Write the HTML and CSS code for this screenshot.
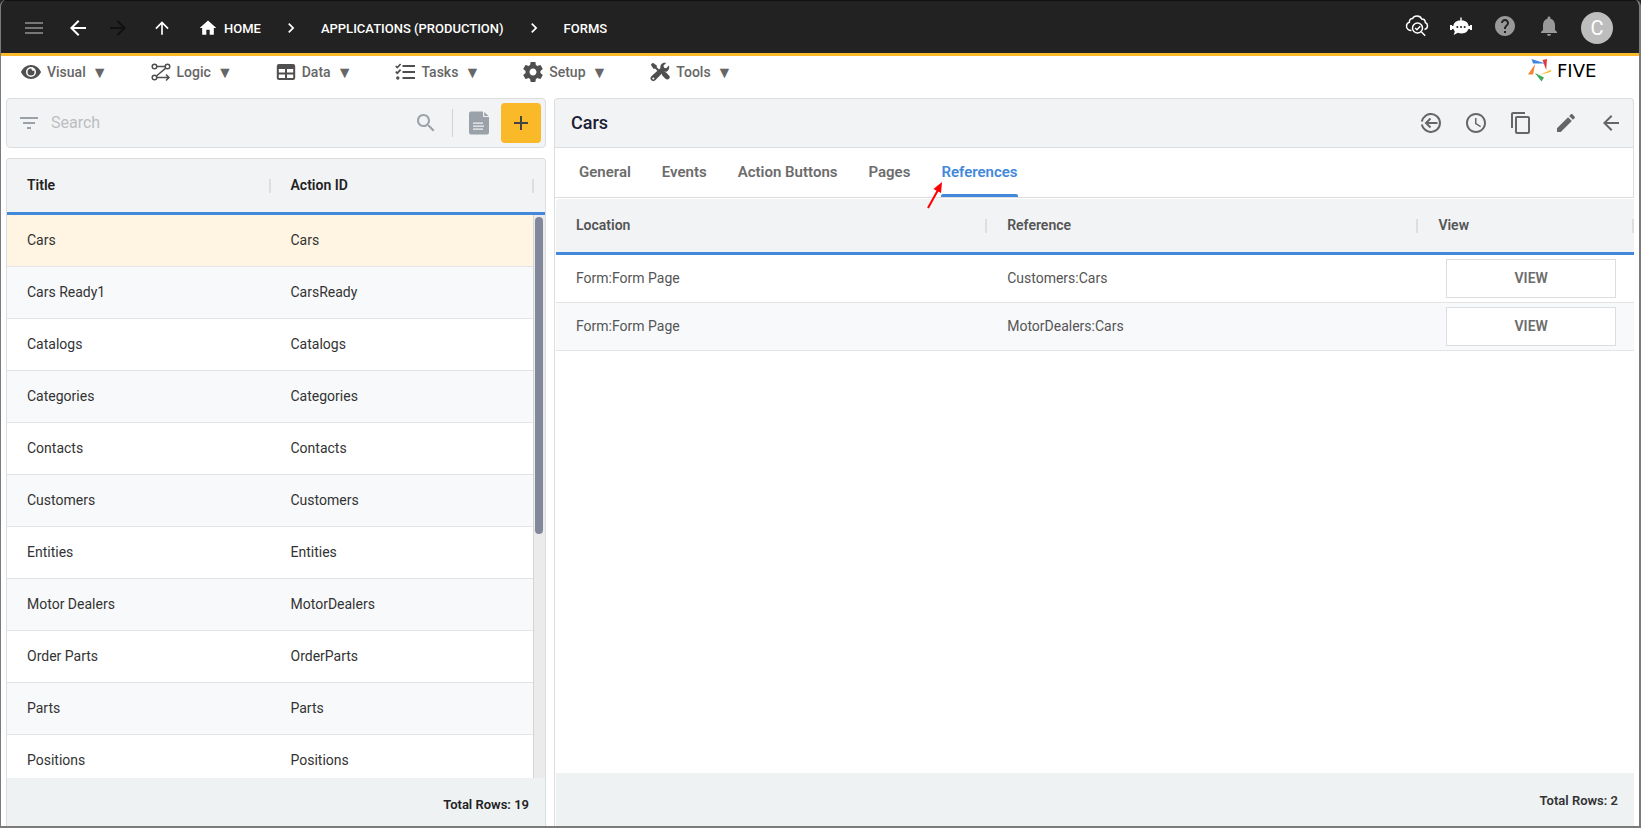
FILE: index.html
```html
<!DOCTYPE html>
<html lang="en">
<head>
<meta charset="utf-8">
<title>Five - Forms</title>
<link rel="stylesheet" href="styles.css">
</head>
<body>
<div class="app">
  <header class="topbar">
    <div class="nav">
      <button class="icon-btn dim" aria-label="Menu"><svg class="i24" viewBox="0 0 24 24"><path d="M3 18h18v-2H3v2zm0-5h18v-2H3v2zm0-7v2h18V6H3z"/></svg></button>
      <button class="icon-btn" aria-label="Back"><svg class="i24" viewBox="0 0 24 24"><path d="M20 11H7.830l5.590-5.590L12 4l-8 8 8 8 1.410-1.410L7.830 13H20v-2z"/></svg></button>
      <button class="icon-btn off" aria-label="Forward"><svg class="i24" viewBox="0 0 24 24"><path d="M12 4l-1.410 1.410L16.170 11H4v2h12.170l-5.580 5.590L12 20l8-8z"/></svg></button>
      <button class="icon-btn" aria-label="Up"><svg class="i20" viewBox="0 0 24 24"><path d="M4 12l1.410 1.410L11 7.830V20h2V7.830l5.580 5.590L20 12l-8-8-8 8z"/></svg></button>
    </div>
    <nav class="crumbs">
      <a href="#"><svg class="i20" viewBox="0 0 24 24"><path d="M10 20v-6h4v6h5v-8h3L12 3 2 12h3v8z"/></svg>HOME</a>
      <svg class="i20" viewBox="0 0 24 24"><path d="M10 6L8.590 7.410 13.170 12l-4.580 4.590L10 18l6-6z"/></svg>
      <a href="#">APPLICATIONS (PRODUCTION)</a>
      <svg class="i20" viewBox="0 0 24 24"><path d="M10 6L8.590 7.410 13.170 12l-4.580 4.590L10 18l6-6z"/></svg>
      <a href="#">FORMS</a>
    </nav>
    <div class="account">
      <button class="icon-btn" aria-label="Inspect"><svg class="i24 line" viewBox="0 0 24 24"><path d="M6.500 16.500C3.500 16.500 1.500 14.500 1.500 12c0-2 1.200-3.300 2.900-3.800C4.200 5.900 5.600 4.600 7.500 4.600 8.300 2.800 10 2 12 2c2.400 0 4 1.100 4.700 3 2.300 0 3.600 1.500 3.600 3.500 1.500.6 2.200 1.800 2.200 3.200 0 2-1.200 3.300-3 3.800"/><circle cx="12.500" cy="14" r="5"/><path d="M10.200 14l1.700 1.700 3.300-3.500M16.200 17.700l4 4"/></svg></button>
      <button class="icon-btn" aria-label="Assistant"><svg class="i24" viewBox="0 0 24 24"><path d="M11.300 3.500h1.400v3H13c4 0 6.700 2.500 6.700 6.600s-3 6.400-7 6.400c-1.500 0-2.700-.2-3.700-.7L4.600 21l1.300-3.600C4.800 16.300 4.300 14.800 4.300 13c0-4 2.700-6.500 6.700-6.500h.3zM1 11h2v5H1zM21 11h2v5h-2zM2.500 12h2v3h-2zM19.500 12h2v3h-2z"/><g fill="#222"><circle cx="8.300" cy="13" r="1"/><circle cx="12" cy="13" r="1"/><circle cx="15.700" cy="13" r="1"/></g></svg></button>
      <button class="icon-btn soft" aria-label="Help"><svg class="i24" viewBox="0 0 24 24"><path d="M12 2C6.480 2 2 6.480 2 12s4.480 10 10 10 10-4.480 10-10S17.520 2 12 2zm1 17h-2v-2h2v2zm2.070-7.750l-.9.920C13.450 12.900 13 13.500 13 15h-2v-.5c0-1.100.45-2.100 1.170-2.830l1.240-1.260c.37-.36.590-.86.590-1.410 0-1.100-.9-2-2-2s-2 .9-2 2H8c0-2.210 1.790-4 4-4s4 1.790 4 4c0 .88-.36 1.680-.93 2.250z"/></svg></button>
      <button class="icon-btn soft" aria-label="Notifications"><svg class="i24" viewBox="0 0 24 24"><path d="M12 22c1.100 0 2-.9 2-2h-4c0 1.100.89 2 2 2zm6-6v-5c0-3.070-1.640-5.640-4.500-6.320V4c0-.83-.67-1.500-1.500-1.500s-1.500.67-1.500 1.500v.68C7.630 5.360 6 7.920 6 11v5l-2 2v1h16v-1l-2-2z"/></svg></button>
      <button class="avatar" aria-label="Account">C</button>
    </div>
  </header>

  <nav class="menubar">
    <div class="menus">
      <button class="menu"><svg class="i20" viewBox="0 0 20 20"><path d="M10 3C5.500 3 1.700 5.900 0 10c1.700 4.100 5.500 7 10 7s8.300-2.900 10-7c-1.700-4.100-5.500-7-10-7zm0 12a5 5 0 1 1 0-10 5 5 0 0 1 0 10z"/><path d="M10 6.500a3.500 3.500 0 1 0 3.500 3.500c0-.5-.1-.9-.3-1.400A2 2 0 0 1 10.400 6.500z"/></svg>Visual <span>▼</span></button>
      <button class="menu"><svg class="i20 line" viewBox="0 0 20 20"><circle cx="3.500" cy="4.500" r="2.300"/><circle cx="16.500" cy="4.500" r="2.300"/><circle cx="3.500" cy="15.500" r="2.300"/><path d="M5.800 4.500h8.400M14.800 6.200L5.400 14M5.800 15.500h12M15 12.500l3 3-3 3"/></svg>Logic <span>▼</span></button>
      <button class="menu"><svg class="i20" viewBox="0 0 20 20"><path fill-rule="evenodd" d="M3 2h14a2.200 2.200 0 0 1 2.200 2.200v11.600A2.200 2.200 0 0 1 17 18H3a2.200 2.200 0 0 1-2.200-2.200V4.200A2.200 2.200 0 0 1 3 2zM2.800 7v3.500H9V7zM11 7v3.500h6.200V7zM2.800 12.500V16H9v-3.500zM11 12.500V16h6.200v-3.500z"/></svg>Data <span>▼</span></button>
      <button class="menu"><svg class="i20" viewBox="0 0 20 20"><path d="M7.500 3H20v2H7.500zM7.500 9H20v2H7.500zM7.500 15H20v2H7.500z"/><circle cx="2.800" cy="16" r="1.700"/><path class="stroke" d="M.8 4l1.500 1.500L5.600 2M.8 9.700l1.500 1.500 3.300-3.500"/></svg>Tasks <span>▼</span></button>
      <button class="menu"><svg class="i20" viewBox="2 2 20 20"><path d="M19.430 12.980c.04-.32.07-.64.07-.98s-.03-.66-.07-.98l2.110-1.650c.19-.15.24-.42.120-.64l-2-3.460c-.12-.22-.39-.3-.61-.22l-2.490 1c-.52-.4-1.080-.73-1.690-.98l-.38-2.650C14.460 2.180 14.250 2 14 2h-4c-.25 0-.46.18-.49.42l-.38 2.650c-.61.25-1.170.59-1.690.98l-2.490-1c-.23-.09-.49 0-.61.22l-2 3.460c-.13.22-.07.49.120.64l2.110 1.650c-.04.32-.07.65-.07.98s.03.66.07.98l-2.110 1.650c-.19.15-.24.42-.12.64l2 3.460c.12.22.39.3.61.22l2.490-1c.52.4 1.080.73 1.690.98l.38 2.650c.03.24.24.42.49.42h4c.25 0 .46-.18.49-.42l.38-2.650c.61-.25 1.170-.59 1.690-.98l2.490 1c.23.09.49 0 .61-.22l2-3.460c.12-.22.07-.49-.12-.64l-2.110-1.650zM12 15.500c-1.930 0-3.500-1.570-3.500-3.500s1.570-3.500 3.500-3.500 3.500 1.570 3.500 3.500-1.570 3.500-3.500 3.500z"/></svg>Setup <span>▼</span></button>
      <button class="menu"><svg class="i20" viewBox="0 0 20 20"><path d="M.8 2.800L2.800.8l4 2.600v1.900l3.700 3.700-1.500 1.500-3.700-3.700H3.400zM11.200 11l2-2 .8.700c.8-.1 1.500.1 2.100.7l2.900 3c1 1 1 2.400 0 3.400s-2.500 1-3.500 0l-3-3c-.6-.6-.8-1.400-.6-2.100z"/><path fill-rule="evenodd" d="M18.900 3.600l-2.700 2.700-2.200-.6-.5-2.100L16.200.9c-1.900-.6-3.900 0-5.100 1.500-.8 1.200-1 2.500-.6 3.700L1.400 14.300c-1.200 1.100-1.200 2.900-.1 4s2.900 1.100 4 0l8.300-8.600c1.500.4 3 .1 4.200-1 1.400-1.300 1.800-3.300 1.100-5.100zM3.300 15.500a1 1 0 1 1 0 2 1 1 0 0 1 0-2z"/></svg>Tools <span>▼</span></button>
    </div>
    <div class="logo">
      <svg class="i24" viewBox="0 0 24 24"><path fill="#3f87dd" d="M3.500 1l14 4.500H5z"/><path fill="#e5383d" d="M14.500 2L19 1l-.8 11z"/><path fill="#fbb829" d="M23.500 11.500L22.500 14 11.500 17z"/><path fill="#3cab58" d="M7 15l9 4.500-2.500 4z"/><path fill="#f58233" d="M7.200 6L5 16.500H0z"/></svg>
      <span>FIVE</span>
    </div>
  </nav>

  <main class="content">
    <section class="side">
      <div class="searchbar">
        <button class="icon-btn" aria-label="Filter"><svg class="i24" viewBox="0 0 24 24"><path d="M10 18h4v-2h-4v2zM3 6v2h18V6H3zm3 7h12v-2H6v2z"/></svg></button>
        <input type="text" placeholder="Search" aria-label="Search">
        <button class="icon-btn" aria-label="Run search"><svg class="i24" viewBox="0 0 24 24"><path d="M15.500 14h-.79l-.28-.27C15.410 12.590 16 11.110 16 9.500 16 5.910 13.090 3 9.500 3S3 5.910 3 9.500 5.910 16 9.500 16c1.610 0 3.090-.59 4.230-1.570l.27.280v.79l5 4.990L20.490 19l-4.990-5zm-6 0C7.010 14 5 11.990 5 9.500S7.010 5 9.500 5 14 7.010 14 9.500 11.990 14 9.500 14z"/></svg></button>
        <span class="divider"></span>
        <button class="icon-btn doc" aria-label="Document"><svg class="i24" viewBox="0 0 24 24"><path fill-rule="evenodd" d="M4 .5h12v4.500c0 .6.400 1 1 1h5v15.500a2 2 0 0 1-2 2H4a2 2 0 0 1-2-2v-19a2 2 0 0 1 2-2zM6 11.500v1.300h10v-1.300zM6 14.500v1.300h11v-1.300zM6 17.500v1.300h10v-1.300zM17.200.9L21.600 5h-4.400z"/></svg></button>
        <button class="add" aria-label="Add"><svg class="i24" viewBox="0 0 24 24"><path d="M19 13h-6v6h-2v-6H5v-2h6V5h2v6h6v2z"/></svg></button>
      </div>
      <div class="list">
        <div class="list-body">
          <table class="forms">
            <colgroup><col><col><col class="gutter"></colgroup>
            <thead><tr><th>Title</th><th>Action ID</th><th></th></tr></thead>
            <tbody>
              <tr class="selected"><td>Cars</td><td>Cars</td><td></td></tr>
              <tr><td>Cars Ready1</td><td>CarsReady</td><td></td></tr>
              <tr><td>Catalogs</td><td>Catalogs</td><td></td></tr>
              <tr><td>Categories</td><td>Categories</td><td></td></tr>
              <tr><td>Contacts</td><td>Contacts</td><td></td></tr>
              <tr><td>Customers</td><td>Customers</td><td></td></tr>
              <tr><td>Entities</td><td>Entities</td><td></td></tr>
              <tr><td>Motor Dealers</td><td>MotorDealers</td><td></td></tr>
              <tr><td>Order Parts</td><td>OrderParts</td><td></td></tr>
              <tr><td>Parts</td><td>Parts</td><td></td></tr>
              <tr><td>Positions</td><td>Positions</td><td></td></tr>
            </tbody>
          </table>
          <div class="track"><div class="thumb"></div></div>
        </div>
        <footer class="total">Total Rows: 19</footer>
      </div>
    </section>

    <section class="detail">
      <div class="detail-head">
        <h1>Cars</h1>
        <div class="actions">
          <button class="icon-btn" aria-label="Exit"><svg class="i24 line thick" viewBox="0 0 24 24"><path d="M5 6.300a9 9 0 1 1 0 11.400M2.800 10.500a9 9 0 0 1 3.500-5.500M2.800 13.500a9 9 0 0 0 3.500 5.500"/><path d="M18.500 12H7M11.500 7.500L7 12l4.500 4.500"/></svg></button>
          <button class="icon-btn" aria-label="History"><svg class="i24" viewBox="0 0 24 24"><path d="M11.990 2C6.470 2 2 6.480 2 12s4.470 10 9.990 10C17.520 22 22 17.520 22 12S17.520 2 11.990 2zM12 20c-4.420 0-8-3.580-8-8s3.580-8 8-8 8 3.580 8 8-3.580 8-8 8zm.5-13H11v6l5.250 3.150.75-1.230-4.500-2.670z"/></svg></button>
          <button class="icon-btn" aria-label="Copy"><svg class="i24" viewBox="0 0 24 24"><path d="M16 1H4c-1.100 0-2 .9-2 2v14h2V3h12V1zm3 4H8c-1.100 0-2 .9-2 2v14c0 1.100.9 2 2 2h11c1.100 0 2-.9 2-2V7c0-1.100-.9-2-2-2zm0 16H8V7h11v14z"/></svg></button>
          <button class="icon-btn" aria-label="Edit"><svg class="i24" viewBox="0 0 24 24"><path d="M3 17.250V21h3.750L17.810 9.940l-3.750-3.750L3 17.250zM20.710 7.040c.39-.39.390-1.020 0-1.410l-2.340-2.340c-.39-.39-1.020-.39-1.410 0l-1.830 1.830 3.750 3.750 1.830-1.830z"/></svg></button>
          <button class="icon-btn" aria-label="Close"><svg class="i24" viewBox="0 0 24 24"><path d="M20 11H7.830l5.590-5.590L12 4l-8 8 8 8 1.410-1.410L7.830 13H20v-2z"/></svg></button>
        </div>
      </div>
      <div class="tabs" role="tablist">
        <button role="tab">General</button>
        <button role="tab">Events</button>
        <button role="tab">Action Buttons</button>
        <button role="tab">Pages</button>
        <button role="tab" class="active" aria-selected="true">References<svg class="pointer" viewBox="0 0 20 28"><path d="M2 27L12 9" stroke="#f00" stroke-width="2"/><path fill="#f00" d="M16 1l-1 11-7.500-4z"/></svg></button>
      </div>
      <div class="refs-body">
        <table class="refs">
          <colgroup><col class="wide"><col class="wide"><col></colgroup>
          <thead><tr><th>Location</th><th>Reference</th><th>View</th></tr></thead>
          <tbody>
            <tr><td>Form:Form Page</td><td>Customers:Cars</td><td><button class="view">VIEW</button></td></tr>
            <tr><td>Form:Form Page</td><td>MotorDealers:Cars</td><td><button class="view">VIEW</button></td></tr>
          </tbody>
        </table>
      </div>
      <footer class="total">Total Rows: 2</footer>
    </section>
  </main>
</div>
</body>
</html>
```
FILE: styles.css
```css
* { box-sizing: border-box; }

body {
  margin: 0;
  background: #222;
  font-family: Roboto, "Liberation Sans", sans-serif;
  font-size: 14px;
  color: #333;
}

button {
  border: 0;
  padding: 0;
  background: none;
  font: inherit;
  color: inherit;
  cursor: pointer;
}

svg { display: block; fill: currentColor; flex: none; }
.i24 { width: 24px; height: 24px; }
.i20 { width: 20px; height: 20px; }
.line { fill: none; stroke: currentColor; stroke-width: 1.500; }
.thick { stroke-width: 2; }
.stroke { fill: none; stroke: currentColor; stroke-width: 1.700; }

.app {
  height: 100vh;
  display: flex;
  flex-direction: column;
  background: #fff;
  border: solid #7b7b7b;
  border-width: 0 2px 2px 1px;
  border-radius: 6px 6px 0 0;
  overflow: hidden;
}

/* Top bar */
.topbar {
  display: flex;
  align-items: center;
  height: 56px;
  flex: none;
  padding: 1px 26px 0 21px;
  background: #222;
  border-top: 1px solid #111;
  border-bottom: 3px solid #f9b928;
  color: #fff;
}
.nav { display: flex; align-items: center; gap: 20px; }
.nav .icon-btn { width: 24px; display: flex; justify-content: center; }
.nav .icon-btn:nth-child(2) { margin-right: -4px; }
.dim { color: #777; }
.off { color: #111; }
.soft { color: #999; }
.crumbs {
  display: flex;
  align-items: center;
  gap: 20px;
  margin-left: 24px;
  padding-top: 1px;
  font-size: 13px;
  font-weight: 500;
}
.crumbs a {
  display: flex;
  align-items: center;
  gap: 6px;
  color: #fff;
  text-decoration: none;
}
.account { display: flex; align-items: center; gap: 20px; margin-left: auto; }
.account .icon-btn { padding-bottom: 4px; }
.avatar {
  width: 32px;
  height: 32px;
  border-radius: 50%;
  background: #bdbdbd;
  font-size: 20px;
  line-height: 32px;
}

/* Menu bar */
.menubar {
  display: flex;
  justify-content: space-between;
  flex: none;
  height: 42px;
  padding: 0 24px 0 20px;
}
.menus { display: flex; gap: 43px; height: 32px; }
.menu {
  display: flex;
  align-items: center;
  gap: 6px;
  font-weight: 500;
  color: #666;
}
.menu svg { color: #4f4f4f; }
.menu span { font-size: 16px; }
.logo {
  display: flex;
  align-items: center;
  gap: 5px;
  width: 87px;
  height: 28px;
  color: #000;
  font-family: "DejaVu Sans", sans-serif;
  font-size: 18px;
}

/* Two-pane content */
.content {
  flex: 1;
  min-height: 0;
  display: grid;
  grid-template-columns: 1fr 2fr;
  gap: 8px;
  padding: 0 5px;
}
.side { display: flex; flex-direction: column; gap: 10px; min-height: 0; }
.searchbar {
  display: flex;
  align-items: center;
  height: 50px;
  flex: none;
  padding: 0 4px 0 10px;
  background: #f1f3f5;
  border: 1px solid #dcdddf;
  border-radius: 4px;
  color: #9ba1a8;
}
.searchbar input {
  flex: 1;
  min-width: 0;
  margin: 0 10px;
  padding: 0 0 2px;
  border: 0;
  outline: 0;
  background: none;
  font: 16px Roboto, "Liberation Sans", sans-serif;
  color: #333;
}
.searchbar input::placeholder { color: #bcbec1; opacity: 1; }
.divider { width: 1px; height: 28px; margin: 0 14px; background: #d0d3d6; }
.doc { margin-right: 10px; }
.add {
  display: flex;
  align-items: center;
  justify-content: center;
  width: 40px;
  height: 40px;
  border-radius: 4px;
  background: #f9b928;
  color: #444;
}

table { width: 100%; border-collapse: separate; border-spacing: 0; table-layout: fixed; }
th {
  position: relative;
  height: 56px;
  padding: 0 20px 2px;
  background: #f1f3f5;
  border-bottom: 3px solid #4288db;
  text-align: left;
  font-weight: 600;
}
th::after {
  content: "";
  position: absolute;
  top: 20px;
  right: 0;
  width: 2px;
  height: 14px;
  background: #dcdee0;
}
td { padding: 0 20px 2px; border-bottom: 1px solid #e2e4e6; }
tbody tr:nth-child(even) { background: #f8f9fb; }

.list {
  flex: 1;
  min-height: 0;
  display: flex;
  flex-direction: column;
  border: 1px solid #dcdddf;
  border-bottom: 0;
  border-radius: 4px 4px 0 0;
  overflow: hidden;
}
.list-body { position: relative; flex: 1; min-height: 0; overflow: hidden; }
.gutter { width: 11px; }
.forms th { color: #222; }
.forms td { height: 52px; color: #333; }
.forms th:last-child, .forms td:last-child { padding: 0; }
.forms th:last-child::after { display: none; }
.forms .selected { background: #fff5e2; }
.track {
  position: absolute;
  top: 56px;
  right: 0;
  bottom: 0;
  width: 12px;
  padding: 2px 2px 0 1px;
  background: #ebebeb;
  border-left: 1px solid #d4d4d4;
}
.thumb { height: 317px; border-radius: 4px; background: #81889a; }
.total {
  flex: none;
  padding: 19px 16px 14px;
  background: #eef2f3;
  text-align: right;
  font-size: 13px;
  line-height: 15px;
  font-weight: 600;
  color: #222;
}

/* Detail pane */
.detail {
  display: flex;
  flex-direction: column;
  min-height: 0;
  border-left: 1px solid #dcdddf;
  border-radius: 4px 4px 0 0;
}
.detail-head {
  display: flex;
  align-items: center;
  justify-content: space-between;
  height: 50px;
  flex: none;
  padding: 0 10px 0 16px;
  background: #f1f3f5;
  border: 1px solid #dcdddf;
  border-left: 0;
  border-radius: 4px 4px 0 0;
}
.detail-head h1 {
  margin: 0;
  padding-bottom: 2px;
  font-size: 18px;
  font-weight: 500;
  color: #1c2033;
}
.actions { display: flex; gap: 21px; color: #666; }
.tabs {
  display: flex;
  gap: 31px;
  height: 50px;
  flex: none;
  margin-bottom: 1px;
  padding-left: 24px;
  border: 1px solid #dcdddf;
  border-width: 0 1px 1px 0;
}
.tabs button {
  position: relative;
  padding-bottom: 2px;
  font-size: 15px;
  font-weight: 600;
  color: #6c6c6c;
}
.tabs .active { z-index: 1; color: #4288db; }
.tabs .active::after {
  content: "";
  position: absolute;
  left: 0;
  right: 0;
  bottom: 0;
  height: 3px;
  border-radius: 2px 2px 0 0;
  background: #4288db;
}
.pointer { position: absolute; left: -15px; top: 33px; width: 20px; height: 28px; }
.refs-body { flex: 1; min-height: 0; padding-left: 1px; }
.refs .wide { width: 40%; }
.refs th { color: #555; }
.refs th:first-child { border-top-left-radius: 4px; }
.refs td { height: 48px; color: #555; }
.refs td:last-child { padding: 0 18px 0 28px; }
.view {
  display: block;
  width: 100%;
  height: 39px;
  padding-bottom: 2px;
  background: #fff;
  border: 1px solid #dcdddf;
  font-weight: 600;
  color: #6c6c6c;
}
.detail .total { margin-left: 1px; padding: 20px 16px 18px; color: #333; }
```
